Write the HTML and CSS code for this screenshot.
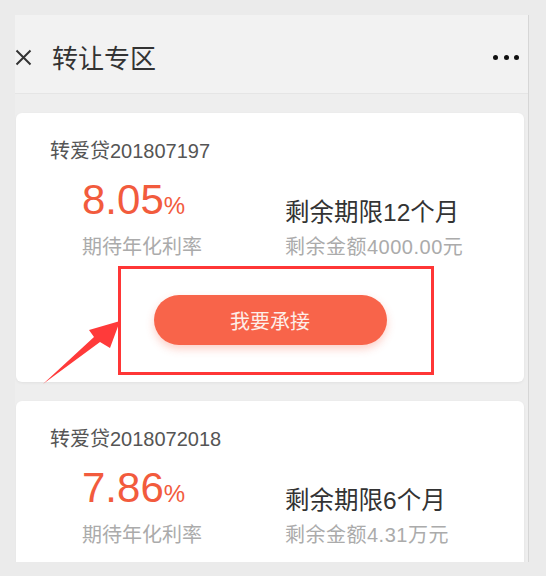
FILE: index.html
```html
<!DOCTYPE html>
<html lang="zh-CN">
<head>
<meta charset="utf-8">
<title>转让专区</title>
<link rel="stylesheet" href="styles.css">
</head>
<body>
<div class="screen">
  <div class="phone">
    <header class="nav">
      <svg class="close" viewBox="0 0 17 17" width="17" height="17"><path d="M1.5 1.5 L15.5 15.5 M15.5 1.5 L1.5 15.5" stroke="#333" stroke-width="2" fill="none"/></svg>
      <h1 class="nav-title">转让专区</h1>
      <div class="more"><span></span><span></span><span></span></div>
    </header>
    <main class="list">
      <section class="card">
        <div class="card-title">转爱贷201807197</div>
        <div class="stats">
          <div class="rate">
            <div class="rate-num">8.05<span class="pct">%</span></div>
            <div class="muted">期待年化利率</div>
          </div>
          <div class="term">
            <div class="term-main">剩余期限12个月</div>
            <div class="muted wide">剩余金额4000.00元</div>
          </div>
        </div>
        <div class="action"><button class="btn">我要承接</button></div>
      </section>
      <section class="card">
        <div class="card-title">转爱贷2018072018</div>
        <div class="stats">
          <div class="rate">
            <div class="rate-num">7.86<span class="pct">%</span></div>
            <div class="muted">期待年化利率</div>
          </div>
          <div class="term">
            <div class="term-main">剩余期限6个月</div>
            <div class="muted wide">剩余金额4.31万元</div>
          </div>
        </div>
      </section>
    </main>
  </div>
  <div class="highlight"></div>
  <svg class="arrow" viewBox="0 0 546 576" width="546" height="576"><polygon points="43,384 94,337 89,330 120,321 110,348 100,342" fill="#ff3a3a"/></svg>
</div>
</body>
</html>
```
FILE: styles.css
```css
html, body {
  margin: 0;
  padding: 0;
  width: 546px;
  height: 576px;
  overflow: hidden;
  background: #ebebeb;
  font-family: "Liberation Sans", "Noto Sans CJK SC", sans-serif;
}

.screen {
  position: relative;
  width: 546px;
  height: 576px;
  padding: 15px 0 0 15px;
  box-sizing: border-box;
}

.phone {
  width: 514px;
  height: 547px;
  box-sizing: border-box;
  border-right: 1px solid #d6d6d6;
  background: #eeeeee;
  overflow: hidden;
  display: flex;
  flex-direction: column;
}

.nav {
  flex-shrink: 0;
  height: 79px;
  box-sizing: border-box;
  padding: 6px 9px 0 0;
  background: #f2f2f2;
  border-bottom: 1px solid #e5e5e5;
  display: flex;
  align-items: center;
}

.close {
  display: block;
  flex-shrink: 0;
}

.nav-title {
  margin: 0 0 0 20px;
  font-size: 26px;
  font-weight: 400;
  line-height: 1;
  color: #333;
  font-family: "Noto Sans CJK SC", sans-serif;
}

.more {
  margin-left: auto;
  display: flex;
  gap: 5.5px;
}

.more span {
  width: 5px;
  height: 5px;
  border-radius: 50%;
  background: #111;
}

.list {
  padding: 19px 4px 0 1px;
  display: flex;
  flex-direction: column;
  gap: 19px;
}

.card {
  flex-shrink: 0;
  background: #fff;
  border-radius: 6px;
  box-shadow: 0 1px 3px rgba(0, 0, 0, 0.06);
  padding: 26px 34px 37px;
}

.card-title {
  font-size: 20px;
  line-height: 24px;
  color: #555;
}

.stats {
  display: flex;
  align-items: flex-end;
  padding-left: 32px;
  margin-top: 13px;
}

.rate {
  width: 203px;
}

.rate-num {
  font-size: 42px;
  line-height: 48px;
  color: #f25b3d;
}

.pct {
  font-size: 24px;
}

.muted {
  margin-top: 5px;
  font-size: 20px;
  line-height: 24px;
  color: #ababab;
}

.term-main {
  font-size: 24.5px;
  line-height: 28px;
  color: #333;
}

.term .muted {
  margin-top: 8px;
}

.wide {
  letter-spacing: 0.5px;
}

.action {
  margin-top: 36px;
  display: flex;
  justify-content: center;
}

.btn {
  width: 233px;
  height: 50px;
  border: none;
  border-radius: 25px;
  background: #f8644a;
  color: #fdeee9;
  font-size: 20px;
  font-family: "Noto Sans CJK SC", sans-serif;
  box-shadow: 0 4px 8px rgba(248, 100, 74, 0.3);
  padding: 0;
}

.highlight {
  position: absolute;
  left: 118px;
  top: 266px;
  width: 316px;
  height: 109px;
  box-sizing: border-box;
  border: 3px solid #ff3636;
}

.arrow {
  position: absolute;
  left: 0;
  top: 0;
  pointer-events: none;
}
```
